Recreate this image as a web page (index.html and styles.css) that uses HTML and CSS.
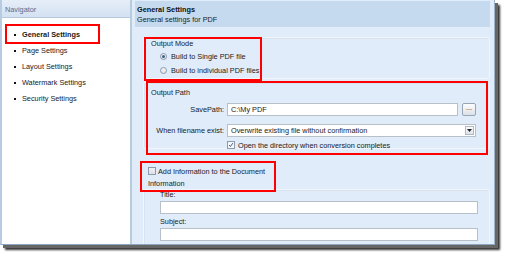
FILE: index.html
```html
<!DOCTYPE html>
<html>
<head>
<meta charset="utf-8">
<link rel="stylesheet" href="styles.css">
</head>
<body>
<div class="window">
  <aside class="nav">
    <div class="nav-head">Navigator</div>
    <ul class="nav-list">
      <li class="active">General Settings</li>
      <li>Page Settings</li>
      <li>Layout Settings</li>
      <li>Watermark Settings</li>
      <li>Security Settings</li>
    </ul>
  </aside>
  <main class="content">
    <div class="content-head">
      <div class="title">General Settings</div>
      <div class="sub">General settings for PDF</div>
    </div>
    <div class="content-body">
      <section class="group group-mode">
        <div class="group-title">Output Mode</div>
        <label class="opt"><span class="radio checked"></span>Build to Single PDF file</label>
        <label class="opt"><span class="radio"></span>Build to individual PDF files</label>
      </section>
      <section class="group group-path">
        <div class="group-title">Output Path</div>
        <div class="row row-save">
          <span class="lbl">SavePath:</span>
          <span class="input grow">C:\My PDF</span>
          <span class="btn">...</span>
        </div>
        <div class="row row-exist">
          <span class="lbl">When filename exist:</span>
          <span class="input grow select">Overwrite existing file without confirmation<span class="drop"><svg width="5" height="3" viewBox="0 0 5 3"><path d="M0 0H5L2.5 3Z" fill="#222"/></svg></span></span>
        </div>
        <div class="row row-open">
          <span class="lbl"></span>
          <label class="opt inline"><span class="check on"><svg width="8" height="8" viewBox="0 0 8 8"><path d="M1.5 4L3.2 6L6.5 1.5" fill="none" stroke="#2a4a8a" stroke-width="1.2"/></svg></span>Open the directory when conversion completes</label>
        </div>
      </section>
      <div class="add"><span class="check add-check"></span>Add Information to the Document Information</div>
      <section class="group group-info">
        <div class="field-lbl first">Title:</div>
        <div class="input wide"></div>
        <div class="field-lbl">Subject:</div>
        <div class="input wide"></div>
        <div class="field-lbl">Author:</div>
      </section>
    </div>
  </main>
  <div class="mark mark-nav"></div>
  <div class="mark mark-mode"></div>
  <div class="mark mark-path"></div>
  <div class="mark mark-add"></div>
</div>
</body>
</html>
```
FILE: styles.css
```css
html, body { margin: 0; padding: 0; background: #ffffff; overflow: hidden; }
body { width: 505px; height: 254px; font-family: "Liberation Sans", Arial, sans-serif; font-size: 7.3px; color: #1a1a1a; }

.window {
  position: relative;
  display: flex;
  width: 495px;
  height: 245px;
  box-sizing: border-box;
  border-left: 2px solid #b7cbe2;
  border-bottom: 1px solid #8ea5bf;
  border-right: 1px solid #9fb3c9;
  box-shadow: 3px 3px 0 0 #666, 5px 5px 2px 0 #333;
  overflow: hidden;
}

.nav { width: 128px; flex: none; background: #ffffff; border-right: 2px solid #b8cce0; display: flex; flex-direction: column; }
.nav-head { height: 18px; box-sizing: border-box; padding: 5px 0 0 3px; color: #4f6f97; background: linear-gradient(#e6eef8, #d3e1f1); border-bottom: 1px solid #b4c8df; }
.nav-list { list-style: none; margin: 0; padding: 9px 0 0 12px; }
.nav-list li { height: 16px; line-height: 14px; display: flex; align-items: center; }
.nav-list li::before { content: ""; width: 2px; height: 2px; background: #111; margin-right: 6px; }
.nav-list li.active { font-weight: bold; }

.content { flex: 1; background: #e1ecfb; display: flex; flex-direction: column; padding: 1px 4px 0 3px; min-height: 0; }
.content > * { flex: none; }
.content-head { height: 26px; box-sizing: border-box; background: #c6daef; padding: 4px 0 0 2px; line-height: 10px; }
.content-head .title { font-weight: bold; color: #111; }
.content-head .sub { color: #222; }

.content-body { padding: 10px 0 0 8px; display: flex; flex-direction: column; }
.content-body > * { flex: none; }
.group { border: 1px solid #f2f6fc; border-radius: 2px; box-shadow: inset 1px 1px 0 #d8e3f1; }
.group-title { height: 11px; line-height: 11px; margin: 0 0 0 7px; }

.group-mode { height: 42px; box-sizing: border-box; padding-top: 0; }
.opt { display: flex; align-items: center; height: 14px; }
.group-mode .opt { padding-left: 16px; }
.radio { width: 7px; height: 7px; border-radius: 50%; border: 1px solid #8b98a8; background: linear-gradient(#f3f5f8, #dfe4ea); margin-right: 4px; box-sizing: border-box; position: relative; }
.radio.checked::after { content: ""; position: absolute; left: 1px; top: 1px; width: 3px; height: 3px; border-radius: 50%; background: #3b5c8a; }

.group-path { margin-top: 3px; height: 67px; box-sizing: border-box; padding-top: 4px; }
.row { display: flex; align-items: center; height: 16px; }
.row-save { margin-top: 3px; }
.row-exist { margin-top: 5px; }
.row-open { margin-top: 1px; height: 12px; }
.lbl { width: 80px; text-align: right; padding-right: 3px; flex: none; }
.input { height: 13px; box-sizing: border-box; border: 1px solid #b7bfc9; background: #fff; display: flex; align-items: center; padding-left: 3px; }
.grow { flex: none; width: 231px; }
.select { width: 249px; position: relative; }
.drop { position: absolute; right: 1px; top: 1px; width: 9px; height: 9px; box-sizing: border-box; border: 1px solid #b0b8c4; background: linear-gradient(#fbfcfd, #dde3ea); display: flex; align-items: center; justify-content: center; }
.btn { width: 14px; height: 13px; box-sizing: border-box; margin-left: 4px; border: 1px solid #9aa5b3; border-radius: 2px; background: linear-gradient(#fdfdfe, #dbe1e8); font-size: 7px; display: flex; align-items: flex-start; justify-content: center; line-height: 8px; }
.check { width: 8px; height: 8px; box-sizing: border-box; border: 1px solid #8f9aa8; background: linear-gradient(#f0f2f5, #dce1e7); margin-right: 3px; display: flex; align-items: center; justify-content: center; flex: none; }
.check.on { background: #f5f7fa; }
.check svg { display: block; }
.opt.inline { height: 12px; }

.add { margin-top: 17px; width: 122px; padding-left: 5px; line-height: 12px; height: 24px; }
.add-check { display: inline-block; vertical-align: -1px; margin-right: 2px; }

.group-info { margin-top: -1px; padding: 0 0 0 16px; height: 80px; box-sizing: border-box; }
.field-lbl { height: 10px; line-height: 10px; margin-top: 3px; }
.field-lbl.first { margin-top: 0; }
.input.wide { width: 318px; margin-top: 1px; }

.mark { position: absolute; border: 2px solid #ff0000; box-sizing: border-box; }
.mark-nav { left: 3px; top: 24px; width: 95px; height: 20px; }
.mark-mode { left: 142px; top: 37px; width: 118px; height: 44px; }
.mark-path { left: 144px; top: 81px; width: 342px; height: 74px; }
.mark-add { left: 138px; top: 161px; width: 136px; height: 31px; }
```
